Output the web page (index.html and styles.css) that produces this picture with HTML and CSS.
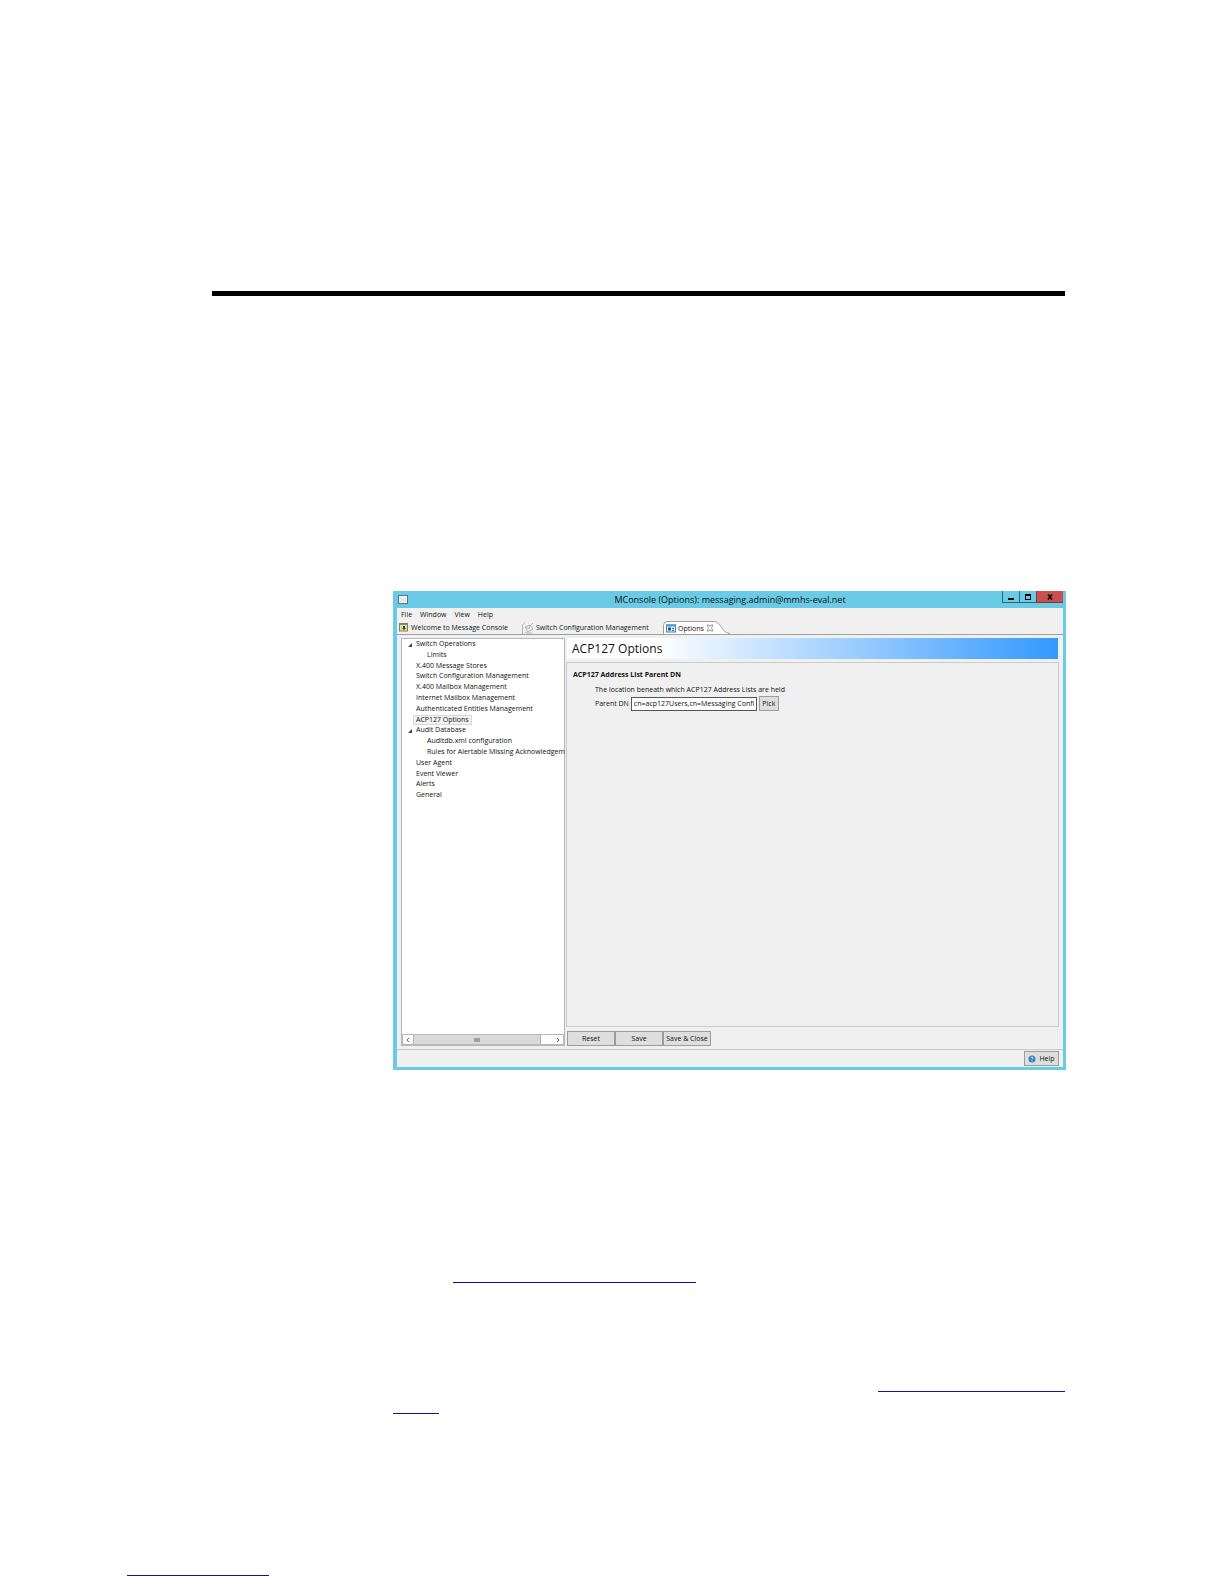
FILE: index.html
```
<!DOCTYPE html>
<html lang="en">
<head>
  <meta charset="UTF-8">
  <meta name="viewport" content="width=device-width, initial-scale=1.0">
  <title>ACP127 Options</title>
  <link rel="stylesheet" href="styles.css">
</head>

<body>
  <div class="page">
    <hr class="rule">

    <main class="content">
      <div class="window">
        <header class="titlebar">
          <svg class="app-icon" viewBox="0 0 10 9">
            <rect x="0.5" y="0.5" width="9" height="8" fill="#f2f4f2" stroke="#58758a"/>
            <path d="M2 3l3 2 3-2M2 7l2-2M8 7L6 5" fill="none" stroke="#d5dcde"/>
          </svg>
          <span class="title">MConsole (Options): messaging.admin@mmhs-eval.net</span>
          <div class="controls">
            <button class="ctl" aria-label="Minimize"><svg viewBox="0 0 10 8"><path d="M2 5h6v2H2z"/></svg></button>
            <button class="ctl" aria-label="Maximize"><svg viewBox="0 0 10 8"><path d="M2 1h6v6H2zM3 3v3h4V3z" fill-rule="evenodd"/></svg></button>
            <button class="ctl close" aria-label="Close"><svg viewBox="0 0 10 8"><path d="M3 1.500l4 5M7 1.500l-4 5" stroke="#000" stroke-width="1.500"/></svg></button>
          </div>
        </header>

        <nav class="menu">
          <a href="#">File</a>
          <a href="#">Window</a>
          <a href="#">View</a>
          <a href="#">Help</a>
        </nav>

        <div class="tabs">
          <button class="tab welcome">
            <svg viewBox="0 0 10 9">
              <rect x="0.500" y="0.500" width="8" height="7.500" fill="#e9dd8c" stroke="#7d8258"/>
              <path d="M1 1h7v1H1z" fill="#6b8fb5"/>
              <path d="M4 3h2v2h1L5 7 3 5h1z" fill="#34432c"/>
            </svg>
            Welcome to Message Console
          </button>
          <button class="tab switch">
            <svg viewBox="0 0 12 12">
              <path d="M0.500 12V3L3 0.500M3 5l5-2 3 4-5 3z" fill="none" stroke="#b4b4b4"/>
              <path d="M3 5l4 2 1-4M9 3l2-2M3 10l2 1h5" fill="none" stroke="#b4b4b4"/>
            </svg>
            Switch Configuration Management
          </button>
          <button class="tab active">
            <svg viewBox="0 0 10 9">
              <rect x="0.500" y="1" width="9" height="7" fill="#e4f1fb" stroke="#3a84b8"/>
              <path d="M0 0.500h10v2H0z" fill="#3a9be0"/>
              <path d="M2 3.500h3v3H2z" fill="#1e5a5c"/>
              <path d="M6 4.500h2M6 6.500h2" stroke="#3b6ea5"/>
            </svg>
            Options
            <svg class="x" viewBox="0 0 8 8">
              <path d="M1 1h2l1 1.500L5 1h2L5.500 4 7 7H5L4 5.500 3 7H1l1.500-3z" fill="#fff" stroke="#777" stroke-width="0.700"/>
            </svg>
          </button>
          <svg class="slope" viewBox="0 0 16 13">
            <path d="M0 0.500C7 0.500 8 12.500 16 12.500V13H0z" fill="#fff"/>
            <path d="M0 0.500C7 0.500 8 12.500 16 12.500" fill="none" stroke="#a0a0a0"/>
          </svg>
        </div>

        <div class="workspace">
          <aside class="sidebar">
            <ul class="tree">
              <li class="open">Switch Operations</li>
              <li class="child">Limits</li>
              <li>X.400 Message Stores</li>
              <li>Switch Configuration Management</li>
              <li>X.400 Mailbox Management</li>
              <li>Internet Mailbox Management</li>
              <li>Authenticated Entities Management</li>
              <li><span class="selected">ACP127 Options</span></li>
              <li class="open">Audit Database</li>
              <li class="child">Auditdb.xml configuration</li>
              <li class="child">Rules for Alertable Missing Acknowledgem</li>
              <li>User Agent</li>
              <li>Event Viewer</li>
              <li>Alerts</li>
              <li>General</li>
            </ul>
            <div class="scrollbar">
              <button aria-label="Scroll left"><svg viewBox="0 0 6 6"><path d="M4 1L2 3l2 2"/></svg></button>
              <div class="thumb"><svg viewBox="0 0 6 6"><path d="M1 1v4M3 1v4M5 1v4"/></svg></div>
              <button aria-label="Scroll right"><svg viewBox="0 0 6 6"><path d="M2 1l2 2-2 2"/></svg></button>
            </div>
          </aside>

          <section class="editor">
            <h1>ACP127 Options</h1>
            <div class="panel">
              <h2>ACP127 Address List Parent DN</h2>
              <p>The location beneath which ACP127 Address Lists are held</p>
              <div class="field">
                <label for="parentDn">Parent DN</label>
                <input type="text" id="parentDn" value="cn=acp127Users,cn=Messaging Confi">
                <button class="btn pick">Pick</button>
              </div>
            </div>
            <div class="actions">
              <button class="btn">Reset</button>
              <button class="btn">Save</button>
              <button class="btn">Save &amp; Close</button>
            </div>
          </section>
        </div>

        <footer class="status">
          <button class="btn help">
            <svg viewBox="0 0 8 8">
              <circle cx="4" cy="4" r="3.500" fill="#2f83cc"/>
              <path d="M3 3c0-1.500 2.200-1.200 2 0 0 .8-1 .8-1 1.500M4 5.500v1" fill="none" stroke="#fff" stroke-width="0.800"/>
            </svg>
            Help
          </button>
        </footer>
      </div>

      <div class="links">
        <a class="link first" href="#" aria-label="Address lists"></a>
        <a class="link second" href="#" aria-label="Configuration"></a>
        <a class="link third" href="#" aria-label="Configuration, continued"></a>
      </div>
    </main>

    <a class="link home" href="#" aria-label="Home"></a>
  </div>
</body>
</html>
```
FILE: styles.css
```
* {
  box-sizing: border-box;
}

body {
  margin: 0;
  background-color: #fff;
  color: #111;
  font-family: "Open Sans", "Noto Sans", sans-serif;
  font-size: 7px;
  line-height: 11px;
}

button,
input {
  font: inherit;
  color: inherit;
}

svg {
  display: block;
  flex: none;
}

.page {
  padding: 291px 158px 8px 127px;
}

.rule {
  height: 5px;
  margin: 0 1px 0 85px;
  border: none;
  background-color: #000;
}

.content {
  margin: 295px 0 0 266px;
}

.window {
  display: flex;
  flex-direction: column;
  min-height: 479px;
  padding: 0 3px 3px 4px;
  background-color: #69cbe6;
}

.titlebar {
  display: flex;
  align-items: center;
  height: 17px;
}

.app-icon {
  width: 10px;
  height: 9px;
  margin-left: 1px;
}

.title {
  flex: 1;
  padding-left: 50px;
  font-size: 9px;
  text-align: center;
}

.controls {
  display: flex;
  align-self: flex-start;
}

.ctl {
  width: 17px;
  height: 12px;
  padding: 0 3px;
  border: 1px solid #2f6576;
  border-top: none;
  border-right: none;
  background: none;
}

.ctl svg {
  width: 10px;
  height: 8px;
}

.close {
  width: 27px;
  padding: 0 8px;
  border-color: #7c3a33;
  background-color: #c75050;
}

.menu {
  display: flex;
  gap: 8px;
  height: 13px;
  padding: 1px 0 0 4px;
  background-color: #f0f0f0;
}

.menu a {
  color: inherit;
  text-decoration: none;
}

.tabs {
  display: flex;
  height: 14px;
  padding-left: 2px;
  border-bottom: 1px solid #a0a0a0;
  background-color: #f0f0f0;
}

.tab {
  display: flex;
  align-items: center;
  gap: 2px;
  height: 13px;
  padding: 0;
  border: none;
  background: none;
  white-space: nowrap;
}

.tab svg {
  width: 10px;
  height: 9px;
}

.welcome {
  width: 123px;
}

.tab.switch {
  width: 141px;
}

.switch svg {
  width: 12px;
  height: 12px;
}

.active {
  padding-left: 2px;
  border-top: 1px solid #a0a0a0;
  border-left: 1px solid #a0a0a0;
  border-radius: 5px 0 0 0;
  background-color: #fff;
}

.active .x {
  width: 8px;
  height: 8px;
}

.slope {
  width: 16px;
  height: 13px;
}

.workspace {
  display: flex;
  flex: 1;
  gap: 1px;
  padding: 3px 4px 3px;
  border-bottom: 1px solid #c4c8c8;
  background-color: #f0f0f0;
}

.sidebar {
  display: flex;
  flex-direction: column;
  justify-content: space-between;
  width: 164px;
  border: 1px solid #b4b8bc;
  background-color: #fff;
}

.tree {
  display: grid;
  grid-auto-rows: 1fr;
  height: 162px;
  margin: 0;
  padding: 0 0 0 14px;
  line-height: 10px;
  list-style: none;
  white-space: nowrap;
}

.tree .child {
  padding-left: 11px;
}

.open::before {
  content: "";
  float: left;
  margin: 4px 0 0 -8px;
  border-left: 4px solid transparent;
  border-bottom: 4px solid #444;
}

.selected {
  display: block;
  width: max-content;
  margin: 0 -3px;
  padding: 0 2px;
  border: 1px solid #d8d8d8;
  background-color: #f3f3f3;
  line-height: 8px;
}

.scrollbar {
  display: flex;
  justify-content: space-between;
  height: 11px;
  border: 1px solid #b8b8b8;
}

.scrollbar button {
  width: 10px;
  padding: 0 2px;
  border: none;
  background-color: #fff;
}

.scrollbar svg {
  width: 6px;
  height: 6px;
  fill: none;
  stroke: #666;
}

.scrollbar .thumb {
  display: flex;
  flex: 1;
  align-items: center;
  justify-content: center;
  margin-right: 12px;
  border: solid #b0b0b0;
  border-width: 0 1px;
  background-color: #dadada;
}

.editor {
  display: flex;
  flex: 1;
  flex-direction: column;
  min-width: 0;
}

h1 {
  height: 21px;
  margin: 0 1px 3px;
  padding-left: 5px;
  background: linear-gradient(to right, #fff 18%, #3399ff);
  font-size: 12px;
  font-weight: normal;
  line-height: 22px;
}

.panel {
  flex: 1;
  padding: 6px;
  border: 1px solid #c8cccc;
}

.panel h2 {
  margin: 0;
  font-size: 7px;
}

.panel p {
  margin: 4px 0 1px 22px;
}

.field {
  display: flex;
  align-items: center;
  gap: 2px;
  margin-left: 22px;
}

.field input {
  width: 126px;
  height: 14px;
  padding: 0 2px;
  border: 1px solid #555;
  background-color: #fff;
}

.btn {
  height: 15px;
  padding: 0;
  border: 1px solid #9c9c9c;
  background-color: #dedede;
}

.pick {
  width: 20px;
}

.actions {
  display: flex;
  margin: 4px 1px 0;
}

.actions .btn {
  width: 48px;
}

.status {
  display: flex;
  justify-content: flex-end;
  height: 17px;
  padding: 1px 4px 0;
  background-color: #f0f0f0;
}

.help {
  display: flex;
  align-items: center;
  justify-content: center;
  gap: 3px;
  width: 35px;
}

.help svg {
  width: 8px;
  height: 8px;
}

.links {
  display: flex;
  flex-direction: column;
  padding-top: 202px;
}

.link {
  display: block;
  height: 11px;
  border-bottom: 1px solid #1010a8;
}

.first {
  width: 243px;
  margin-left: 60px;
}

.second {
  align-self: flex-end;
  width: 187px;
  margin: 98px 1px 0 0;
}

.third {
  width: 46px;
  margin-top: 11px;
}

.home {
  width: 142px;
  margin-top: 151px;
}
```
